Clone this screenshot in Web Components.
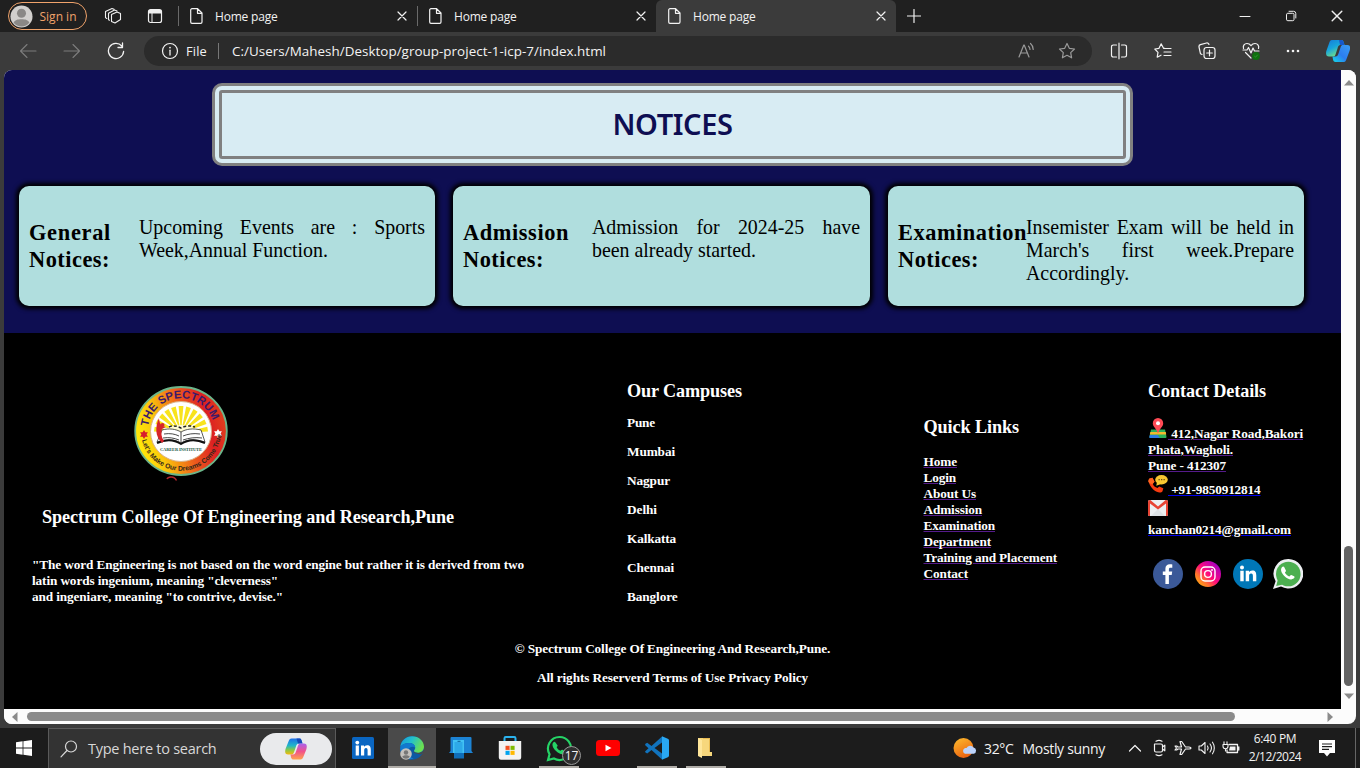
<!DOCTYPE html>
<html lang="en">
<head>
<meta charset="utf-8">
<title>Home page</title>
<style>
html,body{margin:0;height:100%;overflow:hidden;background:#3b3b3b}
body{font-family:"Open Sans","Noto Sans",sans-serif;font-size:12px;color:#fff}
</style>
</head>
<body>
<desktop-screen></desktop-screen>
<script>
const define = (name, html, setup) => customElements.define(name, class extends HTMLElement {
  connectedCallback() {
    if (this.shadowRoot) return;
    const t = document.createElement('template');
    t.innerHTML = typeof html === 'function' ? html(this) : html;
    this.attachShadow({mode: 'open'}).appendChild(t.content.cloneNode(true));
    if (setup) setup(this);
  }
});

/* Icon library: [viewBox width, viewBox height, markup] */
const S = 'fill="none" stroke="currentColor" stroke-linecap="round" stroke-linejoin="round"';
const waPath = 'M8 1.2a6.8 6.8 0 0 0-5.9 10.2L1.2 14.8l3.5-.9A6.8 6.8 0 1 0 8 1.2z';
const handset = 'M5.6 4.4c-.3-.5-.9-.5-1.3 0-1 1.2-.3 3.2 1.5 5s4 2.6 5.2 1.6c.7-.5.7-1.1.2-1.4l-1.4-.8c-.4-.2-.7 0-1.1.6-.9-.2-2.1-1.4-2.4-2.3.5-.4.7-.7.5-1.1z';
const ICONS = {
  avatar:[24,24,'<circle cx="12" cy="12" r="11.5" fill="#d2d0ce"/><circle cx="12" cy="8.6" r="4.7" fill="#8a8886"/><path d="M3.8 18.6C5 15.4 8 14.8 12 14.8s7 .6 8.200 3.800A10.500 10.500 0 0 1 3.800 18.600z" fill="#8a8886"/>'],
  workspaces:[18,18,`<g ${S} stroke-width="1.1"><path d="M7.500 7.500L13 5l3.500 1.500v6L11 16l-3.500-1.500z"/><path d="M5.500 13.300L4.500 12.800V6.200L10.500 3l2.500 1M2.800 11.500L1.500 10.600V4.600L8 1.500l2 .8"/></g>`],
  tabactions:[16,16,`<rect x="1.500" y="1.500" width="13" height="13" rx="2" ${S} stroke-width="1.200"/><path d="M2 2h12v3.500H2z" fill="currentColor"/><path d="M5 5v9" ${S} stroke-width="1"/>`],
  file:[13,16,`<path d="M2 .7h5.600L12 5v9a1.300 1.300 0 0 1-1.300 1.300H2A1.300 1.300 0 0 1 .7 14V2A1.300 1.300 0 0 1 2 .7zM7.500 1v4.300H12" ${S} stroke-width="1.200"/>`],
  close:[10,10,`<path d="M1 1l8 8M9 1l-8 8" ${S} stroke-width="1.200"/>`],
  plus:[14,14,`<path d="M7 .5v13M.5 7h13" ${S} stroke-width="1.200"/>`],
  min:[12,12,`<path d="M1 6.500h10" ${S} stroke-width="1"/>`],
  restore:[12,12,`<path d="M1.500 4.500a1.200 1.200 0 0 1 1.200-1.200h5A1.200 1.200 0 0 1 9 4.500v5a1.200 1.200 0 0 1-1.200 1.200h-5a1.200 1.200 0 0 1-1.300-1.200zM4 1.300h4.500A2.300 2.300 0 0 1 10.800 3.600V8" ${S} stroke-width="1"/>`],
  back:[18,16,`<path d="M17 8H1.500M8 1.500L1.500 8 8 14.500" ${S} stroke-width="1.100"/>`],
  forward:[18,16,`<path d="M1 8h15.500M10 1.500L16.500 8 10 14.500" ${S} stroke-width="1.100"/>`],
  reload:[18,18,`<path d="M16.600 9.500A7.600 7.600 0 1 1 14.800 4M15.500 1v4.500H11" ${S} stroke-width="1.300"/>`],
  info:[18,18,`<circle cx="9" cy="9" r="7.500" ${S} stroke-width="1.200"/><path d="M9 8.200V13" ${S} stroke-width="1.300"/><circle cx="9" cy="5.600" r=".9" fill="currentColor"/>`],
  read:[18,16,`<path d="M1 15L5.800 3h.4L11 15M2.700 11h6.600M10.500 4.200c1 .8 1.500 2 1.500 3.300M12.500 1.500c1.800 1.500 2.700 3.500 2.700 6" ${S} stroke-width="1.200"/>`],
  star:[18,18,`<path d="M9 1.500l2.300 4.800 5.200.7-3.800 3.600.9 5.200L9 13.300l-4.600 2.500.9-5.200L1.500 7l5.200-.7z" ${S} stroke-width="1.200"/>`],
  split:[18,18,`<path d="M6.500 3H3.200A1.700 1.700 0 0 0 1.500 4.700v8.600A1.700 1.700 0 0 0 3.200 15h3.300M11.500 3h3.300a1.700 1.700 0 0 1 1.700 1.700v8.600a1.700 1.700 0 0 1-1.700 1.700h-3.300M9 1.200v15.600" ${S} stroke-width="1.200"/>`],
  favs:[18,18,`<path d="M10.800 6.300H9.500L7.200 1.800 5 6.300l-4.200.7L4 10.300l-.8 4.900L7 13.200M10.800 6.500H17M10 10h7M10 13.500h7" ${S} stroke-width="1.200"/>`],
  collections:[18,18,`<rect x="6" y="5.500" width="11" height="11" rx="2.500" ${S} stroke-width="1.200"/><path d="M11.500 8.200v5.600M8.700 11h5.600M4 12.500L2.500 11.800 1 5A2 2 0 0 1 2.400 2.700L8.500 1A2 2 0 0 1 11 2.500" ${S} stroke-width="1.200"/>`],
  health:[18,18,`<path d="M1.500 6.500C.7 3.500 2.500 1.500 5 1.500c1.800 0 3 .8 4 2.200 1-1.400 2.200-2.200 4-2.200 2.800 0 4.300 2.500 3.500 5M1 8h4l1.500-2.500L9 11l2-5 1.500 3H17M3.500 10.500L9 16" ${S} stroke-width="1.200"/><circle cx="14" cy="14" r="3.900" fill="#0f700f"/><path d="M12.300 14l1.200 1.200 2.200-2.400" fill="none" stroke="#3ea13e" stroke-width=".7"/>`],
  dots:[14,4,'<g fill="currentColor"><circle cx="2" cy="2" r="1.300"/><circle cx="7" cy="2" r="1.300"/><circle cx="12" cy="2" r="1.300"/></g>'],
  copilotblue:[24,24,'<defs><linearGradient id="a" x2=".6" y2="1"><stop offset="0" stop-color="#1679d8"/><stop offset=".5" stop-color="#17a5dc"/><stop offset="1" stop-color="#7ce77e"/></linearGradient><linearGradient id="b" x1="1" x2="0" y2="1"><stop offset="0" stop-color="#3a9df5"/><stop offset=".55" stop-color="#2c7df0"/><stop offset="1" stop-color="#12dbe8"/></linearGradient></defs><path d="M6 1h9.500c2 0 2.200 2 3 5h-4c-2 0-2.400 1.500-3 3.500l-2 6c-.7 2-1.300 2-3 2H3c-3 0-3.500-3-2.500-6l2.500-7C3.700 2 4.500 1 6 1z" fill="url(#a)"/><path d="M13 1h2.500c2 0 2.200 2 3 5h-4.500z" fill="#1657cc"/><path d="M18 23H9.500c-2.500 0-2.500-3-3-5.500h3c1.800 0 2.300-1 3-3l2-6c.6-2 1.200-2.500 3-2.500H21.500c3 0 3 3 2 6l-3 8c-.7 2-1.200 3-2.500 3z" fill="url(#b)"/>'],
  windows:[16,16,'<path d="M0 2.200L6.600 1.300v6.300H0zM7.400 1.200L16 0v7.600H7.400zM0 8.400h6.600v6.300L0 13.800zM7.400 8.400H16V16l-8.600-1.200z" fill="#fff"/>'],
  search:[18,18,`<circle cx="11" cy="6.500" r="5.500" ${S} stroke-width="1.200"/><path d="M7 10.500L1 16.800" ${S} stroke-width="1.200"/>`],
  copilot:[24,24,'<defs><linearGradient id="c" y2="1" x2="0"><stop offset="0" stop-color="#1c6fe8"/><stop offset=".45" stop-color="#20b7c8"/><stop offset=".7" stop-color="#83c84c"/><stop offset="1" stop-color="#f6b90c"/></linearGradient><linearGradient id="d" y2="1" x2="0"><stop offset="0" stop-color="#a961ee"/><stop offset=".5" stop-color="#f2528a"/><stop offset="1" stop-color="#ffa34d"/></linearGradient></defs><path d="M7.500 1.500h8c2 0 2 2 3 5h-3.500c-2 0-2.600 1.500-3.200 3.500l-1.700 5c-.7 2-1.300 2.500-3 2.500H4c-3 0-3.300-3-2.300-6l2.800-7c.7-2 1.500-3 3-3z" fill="url(#c)"/><path d="M12.500 1.500h3c2 0 2 2 3 5H14z" fill="#1649b8"/><path d="M16.500 22.500H9.500c-2.500 0-2.500-2.500-3-5h2.500c1.800 0 2.300-1 3-3l1.700-5c.6-2 1.200-3 3-3h3.300c3 0 3.300 3 2.300 6L19.500 19.500c-.7 2-1.500 3-3 3z" fill="url(#d)"/>'],
  linkedin:[22,22,'<rect width="22" height="22" rx="1.500" fill="#0a66c2"/><g fill="#fff"><circle cx="5.300" cy="5.600" r="1.900"/><path d="M3.700 8.600h3.200v9.800H3.700zM9 8.600h3v1.400c.6-1 1.600-1.700 3.100-1.700 3 0 3.700 2 3.700 4.600v5.500h-3.200v-4.900c0-1.300-.2-2.500-1.600-2.500s-1.800 1.100-1.800 2.400v5H9z"/></g>'],
  edge:[24,24,'<defs><linearGradient id="e" x2="1" y2=".4"><stop offset="0" stop-color="#1895dc"/><stop offset=".5" stop-color="#23c1cb"/><stop offset="1" stop-color="#6be052"/></linearGradient></defs><circle cx="12" cy="12" r="11.800" fill="#0c59a4"/><path d="M.3 11C1 4.500 6 .2 12 .2c7 0 12 5 12 10.500 0 3.800-2.900 6-6 6-2.600 0-4-1-4-2 0-.8 1.200-1.200 1.200-3C15.200 9 12.500 7 9 7 5 7 1.500 9 .3 11z" fill="url(#e)"/><path d="M.3 11C2 8.500 5 7 9 7c3.500 0 6.200 2 6.200 4.700-1.500-1.600-5-1.200-6.400 1.300-2 3.600.8 8.500 4.800 9.500C7 25-.8 20 .3 11z" fill="#1279cf"/><path d="M13.500 14.700c0 1 1.500 2.300 4.500 2.300 2.500 0 4.500-1 6-3l.2 2-3.200 2.500-7-1.500z" fill="#4a4a4a"/><circle cx="6" cy="18" r="5.800" fill="#c4c1bd"/><circle cx="6" cy="16.500" r="2.200" fill="#777"/><path d="M2.300 20.800c1-2 6.400-2 7.400 0-1.500 2.600-6 2.600-7.400 0z" fill="#777"/>'],
  pc:[24,24,'<path d="M2.500 1h19a1 1 0 0 1 1 1v13l1.500 2H0l1.500-2V2a1 1 0 0 1 1-1z" fill="#1c83d4"/><path d="M4 4h11v13H4z" fill="#41c2f4"/><path d="M5 17h10v5.500H5z" fill="#0f6db8"/><path d="M5.500 6h8v11h-8z" fill="#2da9e8"/><path d="M8.500 5.300h3" stroke="#0d5c95"/>'],
  store:[24,24,'<path d="M6.500 6V2.200A1.200 1.200 0 0 1 7.700 1h8.600a1.200 1.200 0 0 1 1.200 1.200V6" fill="none" stroke="#2bb3ee" stroke-width="2"/><path d="M.8 5h22.400v16.500a2.200 2.200 0 0 1-2.200 2.200H3a2.200 2.200 0 0 1-2.200-2.200z" fill="#f3f3f3"/><path d="M7.500 9.800h4.100v4.100H7.500z" fill="#f25022"/><path d="M12.500 9.800h4.100v4.100h-4.100z" fill="#7fba00"/><path d="M7.500 14.800h4.100v4.100H7.500z" fill="#00a4ef"/><path d="M12.500 14.800h4.100v4.100h-4.100z" fill="#ffb900"/>'],
  whatsapp:[16,16,`<path d="${waPath}" fill="#1c1c1c" stroke="#25d366" stroke-width="1.300"/><path d="${handset}" fill="#25d366"/>`],
  youtube:[24,16,'<rect width="24" height="16" rx="3.500" fill="#f00"/><path d="M9.500 4.700v6.600l6-3.300z" fill="#fff"/>'],
  vscode:[24,24,'<path d="M17 .5L6.500 10 2.200 6.800.5 7.800 0 9l3.500 3.200L0 15.500l.5 1 1.700 1L6.500 14 17 23.500z" fill="#1173bd"/><path d="M17 17.500V6.500L9.500 12z" fill="#1c1c1c"/><path d="M17 .3l5.800 2.500c.7.300 1.200.8 1.200 1.700v15c0 .9-.5 1.400-1.200 1.700L17 23.700z" fill="#29a8f3"/>'],
  folder:[16,20,'<path d="M1 0h10v18H1z" fill="#f6d473"/><path d="M6 3.500V0h7v14h2v4H6z" fill="#e9bb52"/><path d="M1 0l4 2v18l-4-2z" fill="#ffe69a"/><path d="M5 1h7v13h3v4H5z" fill="#f7d77c"/>'],
  weather:[24,22,'<defs><linearGradient id="w" x2=".5" y2="1"><stop offset="0" stop-color="#fdbe2e"/><stop offset="1" stop-color="#ec6410"/></linearGradient></defs><circle cx="10.500" cy="11" r="10" fill="url(#w)"/><path d="M12 16.700a3 3 0 0 1-.3-5.500c.6-.3 1.300-.4 1.800-.2a4 4 0 0 1 7-.5 3.200 3.200 0 0 1 .3 6.200z" fill="#bcd3fb"/>'],
  chevron:[14,8,`<path d="M1.500 7L7 1.500 12.500 7" ${S} stroke-width="1.200"/>`],
  meet:[16,18,`<path d="M3.500 5h6.500a1.500 1.500 0 0 1 1.500 1.500v5A1.500 1.500 0 0 1 10 13H5a1.500 1.500 0 0 1-1.500-1.500zM11.500 8l2.300-1.800v5.600L11.500 10M5 2.200c2-1.200 4-1.200 6 0M5 15.800c2 1.200 4 1.200 6 0" ${S} stroke-width="1.200"/>`],
  plane:[18,16,`<path d="M1 6l1.500 2L1 10h1.700l1.200-1h3.600L6 14.500h1.700L11.500 9H15c1 0 2-.4 2-1s-1-1-2-1h-3.500L7.700 1.500H6L7.500 7H3.900L2.700 6z" ${S} stroke-width="1.200"/>`],
  volume:[18,16,`<path d="M1 6h2.300L7 2.500v11L3.300 10H1zM9.500 6c.8 1.200.8 2.800 0 4M12 4c1.700 2.300 1.700 5.700 0 8M14.500 2.200c2.400 3.300 2.400 8.300 0 11.600" ${S} stroke-width="1.100"/>`],
  battery:[18,14,`<path d="M7 3.500h8.500v8H5V9M16.800 6v3" ${S} stroke-width="1.300"/><path d="M8 5.500h5.500v4H7z" fill="currentColor"/><path d="M2 .8V3M5 .8V3M1 3.500h5v1.700a2.500 2.500 0 0 1-5 0zM3.500 8v2" ${S} stroke-width="1.100"/>`],
  notify:[18,17,'<path d="M1 0h16v13h-5l-3 3.500L6 13H1z" fill="#fff"/><path d="M4 4h10M4 6.700h10M4 9.400h7" stroke="#1c1c1c" stroke-width="1.200"/>'],
  map:[18,20,'<path d="M2 11.500h14l1.500 7.500a1 1 0 0 1-1 1h-15a1 1 0 0 1-1-1z" fill="#2cb05a"/><path d="M1.300 14h15.500l.4 2.500H.8z" fill="#f4b82e"/><path d="M.8 17h8l2 3H1a.8.800 0 0 1-.7-1z" fill="#2b7de1"/><path d="M9 0a5.200 5.200 0 0 0-5.200 5.300C3.800 9 7.500 10.500 9 15.500c1.500-5 5.200-6.500 5.200-10.200A5.200 5.200 0 0 0 9 0z" fill="#ff4b55"/><circle cx="9" cy="5.200" r="2" fill="#fff"/>'],
  phone:[20,18,'<path d="M1.500 3.500l3-.8 2 4-1.700 2c.6 2 2.200 3.600 4.700 4.300l1.700-1.500 4.100 1.800-.8 3C13.500 18 9.500 18.300 5.500 14.800S-.5 5.500 1.500 3.500z" fill="#f73b10"/><path d="M1.500 3.500l3-.8 2 4-1.700 2c-1 1.300-4-.7-4.600-2.200.2-1.500.6-2.500 1.300-3z" fill="#ff641f"/><ellipse cx="13.500" cy="4.800" rx="6.300" ry="4.700" fill="#f8c831"/><path d="M9 7l-.7 3.800L13 9z" fill="#f8c831"/><path d="M10.500 4.700h1.300M13 4.700h1.300M15.500 4.700h1.300" stroke="#6b5212" stroke-width="1.200"/>'],
  gmail:[20,16,'<rect width="20" height="16" rx="1.500" fill="#eceff1"/><path d="M10 9l7 7H3z" fill="#dde2e5"/><path d="M1.700 0h.6L10 6.500 17.700 0h.6A1.700 1.700 0 0 1 20 1.700V14.500a1.500 1.500 0 0 1-1.500 1.500H18V3.500L10 9.500 2 3.500V16h-.5A1.500 1.500 0 0 1 0 14.500V1.700A1.700 1.700 0 0 1 1.700 0z" fill="#e84434"/>'],
  facebook:[30,30,'<circle cx="15" cy="15" r="15" fill="#3b5998"/><path d="M12.400 25V16H9.800v-3.600h2.600v-2.600c0-3 1.700-4.500 4.400-4.500 1.200 0 2 .1 2.500.2v3.200h-1.700c-1.400 0-1.700.7-1.700 1.700v2h3.300l-.5 3.600h-2.800v9z" fill="#fff"/>'],
  instagram:[26,26,'<defs><linearGradient id="g" x2="1" y1="1" y2="0"><stop offset="0" stop-color="#ffc800"/><stop offset=".3" stop-color="#ff6c32"/><stop offset=".5" stop-color="#ff0a7c"/><stop offset=".8" stop-color="#b900b4"/><stop offset="1" stop-color="#5000d8"/></linearGradient></defs><circle cx="13" cy="13" r="13" fill="url(#g)"/><g fill="none" stroke="#fff" stroke-width="1.400"><rect x="6" y="6" width="14" height="14" rx="4"/><circle cx="13" cy="13" r="3.400"/></g><circle cx="17" cy="9" r=".9" fill="#fff"/>'],
  linkedinround:[30,30,'<circle cx="15" cy="15" r="15" fill="#0077b7"/><g fill="#fff"><circle cx="9" cy="8.600" r="2"/><path d="M7.300 11.800h3.400v10.500H7.300zM12.700 11.800H16v1.500c.6-1 1.700-1.800 3.300-1.800 3.200 0 4 2 4 5v5.800h-3.400v-5.200c0-1.400-.2-2.700-1.800-2.700s-2 1.200-2 2.600v5.300h-3.400z"/></g>'],
  whatsappround:[30,30,'<path d="M15.300 0A14.700 14.700 0 0 0 2.600 22.200L0 30l8-2.400A14.800 14.800 0 1 0 15.300 0z" fill="#eceff1"/><circle cx="15.300" cy="15" r="12.300" fill="#4caf50"/><path d="M3.200 27l1.700-6.500 5 5z" fill="#4caf50"/><path d="M11.300 8.300c-.5-1-1.600-1-2.400 0-1.700 2.200-.7 5.600 2.400 8.600s6.900 4.600 9.300 2.700c1.100-.9 1.200-2 .5-2.400l-2.800-1.300c-.7-.2-1.200.9-1.900 1.500-1.600-.4-3.600-2-4.500-4 .6-.7 1.300-1.300 1-2z" fill="#fff"/>'],
  up:[10,6,'<path d="M5 0l5 5.500H0z" fill="#8b8b8b"/>'],
  down:[10,6,'<path d="M0 .5h10L5 6z" fill="#8b8b8b"/>'],
  left:[6,10,'<path d="M0 5l5.500-5v10z" fill="#8b8b8b"/>'],
  right:[6,10,'<path d="M.5 0L6 5 .5 10z" fill="#8b8b8b"/>']
};
define('ui-icon', el => {
  const [w,h,m] = ICONS[el.getAttribute('name')];
  const W = el.getAttribute('w') || w, H = el.getAttribute('h') || W*h/w;
  return `<style>:host{display:inline-block;flex:none;width:${W}px;height:${H}px}svg{display:block}</style><svg width="${W}" height="${H}" viewBox="0 0 ${w} ${h}">${m}</svg>`;
});

define('browser-tab', `<style>
:host{display:flex;align-items:center;width:239px;height:32px;box-sizing:border-box;padding:0 10px 0 12px;color:#f2f2f2;background:linear-gradient(#6a6a6a,#6a6a6a) 0 50%/1px 20px no-repeat}
:host([active]){width:240px;background:#3b3b3b;border-radius:6px 6px 0 0}
.t{flex:1;padding-left:12px}
</style><ui-icon name="file"></ui-icon><div class="t"><fit-text w="62.500"><slot></slot></fit-text></div><ui-icon name="close"></ui-icon>`);

define('tab-strip', `<style>
:host{display:flex;height:32px;background:#202020;align-items:center;color:#f0f0f0}
.sign{display:flex;align-items:center;gap:6.500px;margin-left:8px;width:79px;height:28px;box-sizing:border-box;border:1.500px solid #f0a36b;border-radius:14px;padding-left:1px;color:#f0a36b}
.plus{margin-left:10.500px}.win{margin-left:auto;display:flex;gap:34px;padding-right:17px;align-items:center}
</style>
<div class="sign"><ui-icon name="avatar" w="23"></ui-icon><fit-text w="37">Sign in</fit-text></div>
<ui-icon name="workspaces" style="margin-left:17px"></ui-icon><ui-icon name="tabactions" style="margin:0 15px 0 25px"></ui-icon>
<browser-tab>Home page</browser-tab><browser-tab>Home page</browser-tab><browser-tab active>Home page</browser-tab>
<ui-icon class="plus" name="plus"></ui-icon>
<div class="win"><ui-icon name="min"></ui-icon><ui-icon name="restore"></ui-icon><ui-icon name="close" w="12"></ui-icon></div>`);

define('address-bar', `<style>
:host{display:flex;height:38px;background:#3b3b3b;align-items:center;color:#f3f3f3}
.nav{display:flex;gap:26px;padding-left:19px;width:125px;box-sizing:border-box;align-items:center;color:#7c7c7c}
.url{display:flex;align-items:center;width:948px;height:30px;margin-left:19px;background:#2b2b2b;border-radius:15px;padding:0 16px;box-sizing:border-box;font-size:13.400px}
.sep{width:1px;height:16px;background:#777;margin:0 13px 0 11px}
.dim{color:#9a9a9a;margin-left:auto;display:flex;gap:22px}
.acts{flex:1;display:flex;align-items:center;justify-content:space-between;padding:0 10px 0 18px}
</style>
<div class="nav"><ui-icon name="back"></ui-icon><ui-icon name="forward"></ui-icon><ui-icon name="reload" style="color:#f3f3f3"></ui-icon></div>
<div class="url"><ui-icon name="info" style="margin:0 7px 0 1px"></ui-icon><fit-text w="21" style="font-size:12.800px">File</fit-text><i class="sep"></i><fit-text w="374">C:/Users/Mahesh/Desktop/group-project-1-icp-7/index.html</fit-text>
<div class="dim"><ui-icon name="read"></ui-icon><ui-icon name="star"></ui-icon></div></div>
<div class="acts"><ui-icon name="split"></ui-icon><ui-icon name="favs"></ui-icon><ui-icon name="collections"></ui-icon><ui-icon name="health"></ui-icon><ui-icon name="dots"></ui-icon><ui-icon name="copilotblue"></ui-icon></div>`);

define('notice-card', `<style>
:host{display:flex;justify-content:space-between;width:416px;height:120px;box-sizing:border-box;padding:0 10px;background:#b0dede;border-radius:10px;box-shadow:0 0 4px 3px #000;color:#000;font-family:"Liberation Serif",serif}
:host([wide]){width:417px}
.h{padding-top:33px;font:bold 22.400px/27px "Liberation Serif",serif}
p{margin:30px 0 0;width:var(--w);font-size:19.900px;line-height:23px;text-align:justify}
</style><div class="h"><slot name="title"></slot></div><p><slot></slot></p>`);

define('notice-board', `<style>
:host{display:block;height:263px;background:#0e0e52;box-sizing:border-box;padding-top:13px}
.title{width:921px;height:83px;box-sizing:border-box;margin-left:208px;border:10px double #808080;border-radius:10px;background:#d8ecf3;color:#0e0e52;display:flex;align-items:center;justify-content:center;font:600 29px "Noto Sans",sans-serif;padding-bottom:3px}
.cards{display:flex;gap:18px;padding:20px 0 0 15px}
</style>
<div class="title"><fit-text w="120">NOTICES</fit-text></div>
<div class="cards">
<notice-card style="--w:286px"><div slot="title"><fit-text w="82">General</fit-text><fit-text w="81">Notices:</fit-text></div>Upcoming Events are : Sports Week,Annual Function.</notice-card>
<notice-card wide style="--w:268px"><div slot="title"><fit-text w="106">Admission</fit-text><fit-text w="81">Notices:</fit-text></div>Admission for 2024-25 have been&nbsp;already started.</notice-card>
<notice-card style="--w:268px"><div slot="title" style="width:128px"><fit-text w="129">Examination</fit-text><fit-text w="81">Notices:</fit-text></div>Insemister Exam will be held in March's first week.Prepare Accordingly.</notice-card>
</div>`);

define('college-logo', () => {
  let rays = '';
  for (let i = 0; i < 11; i++) {
    const a = Math.PI * (1 + (i + .5) / 11), b = .09;
    rays += `<path d="M47 47L${(47+27*Math.cos(a-b)).toFixed(1)} ${(47+27*Math.sin(a-b)).toFixed(1)}L${(47+27*Math.cos(a+b)).toFixed(1)} ${(47+27*Math.sin(a+b)).toFixed(1)}z" fill="#f8e31d"/>`;
  }
  return `<style>:host{display:block;width:94px;height:96px}svg{display:block;overflow:visible}</style>
<svg width="94" height="96" viewBox="0 0 94 96"><defs>
<linearGradient id="r" y1=".6" y2=".35"><stop offset="0" stop-color="#ffee0a"/><stop offset=".25" stop-color="#fbc40c"/><stop offset=".55" stop-color="#ee5b1c"/><stop offset=".8" stop-color="#dc1f22"/><stop offset="1" stop-color="#e2441c"/></linearGradient>
<path id="top" d="M14.300 40.500A33 32 0 0 1 80 42L82 50"/><path id="bot" d="M8 54A40 39.500 0 0 0 86 54L88 48"/></defs>
<ellipse cx="47" cy="45" rx="45.800" ry="44" fill="url(#r)" stroke="#6cb58a" stroke-width="1.800"/>
<ellipse cx="47" cy="45.500" rx="30.500" ry="30" fill="#fff" stroke="#d9b28b" stroke-width="1"/>
${rays}
<ellipse cx="47" cy="45" rx="15" ry="6" fill="#fffbd0"/>
<path d="M35 41c4-2 8-1 12 1 4-2 8-3 14-1" fill="none" stroke="#222" stroke-width="1.500" stroke-dasharray="3 2"/>
<path d="M28 44c7-2 14-1 19 2 5-3 12-4 20-2l4 12c-9-3-18-3-24 1-6-4-15-4-24-1z" fill="#fff" stroke="#333" stroke-width=".8"/>
<path d="M47 46v11M30 48c6-1 11 0 15 2M29 52c6-1 11 0 16 2M49 50c5-2 10-3 17-2M49 54c6-2 12-3 19-2" fill="none" stroke="#333" stroke-width=".9"/>
<path d="M23 57c9-4 18-3 24 1 6-4 15-5 24-1" fill="none" stroke="#111" stroke-width="2"/>
<path d="M25 32c-4 9-4 18 3 25l2-2c-3-4-3-8-2-12l4-2-4-1c-2-2-3-5-3-8z" fill="#d6242a"/><circle cx="28.500" cy="39" r="2" fill="#d6242a"/>
<path d="M10 44l1.300 2.200h2.600l-1.300 2.300 1.300 2.300h-2.600L10 53l-1.300-2.200H6.100l1.300-2.300-1.300-2.300h2.600z" fill="#d81e2c"/><path d="M84 43l1.300 2.200h2.600l-1.300 2.300 1.300 2.300h-2.600L84 52l-1.300-2.200h-2.600l1.300-2.300-1.300-2.300h2.600z" fill="#fff"/>
<text font-family="Liberation Serif,serif" font-weight="bold" font-size="4.600" fill="#1d5a4a" x="26" y="64.500" textLength="42">CAREER INSTITUTE</text>
<text font-family="Liberation Sans,sans-serif" font-size="11.200" fill="#3a1b6b"><textPath href="#top">THE SPECTRUM</textPath></text>
<text font-family="Liberation Sans,sans-serif" font-size="6.800" fill="#33271b"><textPath href="#bot">Let's Make Our Dreams Come True</textPath></text>
<path d="M33 93c1-2.500 7-3.500 9.500 1.500" fill="none" stroke="#b3262b" stroke-width="1.500"/></svg>`;
});

define('footer-heading', `<style>:host{display:block;font-size:18.200px;line-height:21px}</style><slot></slot>`);
define('footer-link', `<style>:host{display:block;height:16px}fit-text{--deco:underline 1px var(--line,#551a8b)}</style><fit-text><slot></slot></fit-text>`,
  el => el.shadowRoot.querySelector('fit-text').setAttribute('w', el.getAttribute('w')));

define('site-footer', `<style>
:host{display:block;height:376px;background:#000;color:#fff;font:bold 13.280px/16px "Liberation Serif",serif}
.cols{display:grid;grid-template-columns:595px 296.500px 224.500px 1fr;padding-left:28px;height:308px;box-sizing:border-box}
.about{padding-top:53px}.about footer-heading{margin:25px 0 29px 10px}college-logo{margin-left:101.500px}
.camp{padding-top:48px;display:flex;flex-direction:column;gap:13px}
.quick{padding-top:84px}.quick footer-heading{margin-bottom:16px}
.contact{padding-top:48px}.contact footer-heading{margin-bottom:16px}
.row{display:flex;align-items:flex-end;height:24px;box-sizing:border-box}
.b{--line:#0000ee}
.soc{display:flex;align-items:center;margin:21px 0 0 5px}
.copy{display:flex;flex-direction:column;align-items:center;gap:13px}
</style>
<div class="cols">
<div class="about"><college-logo></college-logo><footer-heading><fit-text w="412">Spectrum College Of Engineering and Research,Pune</fit-text></footer-heading>
<fit-text w="492">"The word Engineering is not based on the word engine but rather it is derived from two</fit-text><fit-text w="246">latin words ingenium, meaning "cleverness"</fit-text><fit-text w="251">and ingeniare, meaning "to contrive, devise."</fit-text></div>
<div class="camp"><footer-heading><fit-text w="115">Our Campuses</fit-text></footer-heading><fit-text w="28">Pune</fit-text><fit-text w="48">Mumbai</fit-text><fit-text w="43">Nagpur</fit-text><fit-text w="30">Delhi</fit-text><fit-text w="49">Kalkatta</fit-text><fit-text w="47">Chennai</fit-text><fit-text w="50.500">Banglore</fit-text></div>
<div class="quick"><footer-heading><fit-text w="95.500">Quick Links</fit-text></footer-heading><footer-link w="33.500">Home</footer-link><footer-link w="32.500">Login</footer-link><footer-link w="52.500">About Us</footer-link><footer-link w="58.500">Admission</footer-link><footer-link w="71.500">Examination</footer-link><footer-link w="67.500">Department</footer-link><footer-link w="133.500">Training and Placement</footer-link><footer-link w="44.500">Contact</footer-link></div>
<div class="contact"><footer-heading><fit-text w="118">Contact Details</fit-text></footer-heading>
<div class="row"><ui-icon name="map" style="margin:0 1px 4px"></ui-icon><footer-link w="135">&nbsp;412,Nagar Road,Bakori</footer-link></div>
<footer-link w="85">Phata,Wagholi.</footer-link><footer-link w="78">Pune - 412307</footer-link>
<div class="row"><ui-icon name="phone" style="margin-bottom:5px"></ui-icon><footer-link class="b" w="92.500">&nbsp;+91-9850912814</footer-link></div>
<div class="row"><ui-icon name="gmail" style="margin-bottom:6px"></ui-icon></div>
<footer-link class="b" w="143">kanchan0214@gmail.com</footer-link>
<div class="soc"><ui-icon name="facebook"></ui-icon><ui-icon name="instagram" style="margin:0 12px"></ui-icon><ui-icon name="linkedinround"></ui-icon><ui-icon name="whatsappround" style="margin-left:10px"></ui-icon></div></div>
</div>
<div class="copy"><fit-text w="315.500">© Spectrum College Of Engineering And Research,Pune.</fit-text><fit-text w="271">All rights Reserverd Terms of Use Privacy Policy</fit-text></div>`);

define('scroll-track', `<style>
:host{display:flex;background:#fcfcfc;align-items:center;box-sizing:border-box}
:host([dir=v]){flex-direction:column;width:15px;height:639px;padding:10px 0 10px}
:host([dir=h]){height:15px;padding:0 8px 0 8px;width:1337px}
.v{width:9px;height:140px;background:#636363;border-radius:5px;margin:auto 0 7px}
.h{height:9px;width:1208px;background:#8b8b8b;border-radius:5px;margin:0 auto 0 9px}
</style>`, el => {
  const v = el.getAttribute('dir') === 'v';
  const t = document.createElement('template');
  t.innerHTML = v ? '<ui-icon name="up"></ui-icon><div class="v"></div><ui-icon name="down"></ui-icon>' : '<ui-icon name="left"></ui-icon><div class="h"></div><ui-icon name="right"></ui-icon>';
  el.shadowRoot.appendChild(t.content.cloneNode(true));
});

define('page-view', `<style>
:host{display:grid;grid-template:639px 15px/1337px 15px;width:1352px;height:654px;margin-left:4px;border-radius:8px;overflow:hidden;background:#fcfcfc}
</style><main><notice-board></notice-board><site-footer></site-footer></main><scroll-track dir="v"></scroll-track><scroll-track dir="h"></scroll-track>`);

define('task-item', `<style>
:host{display:flex;width:49px;height:40px;align-items:center;justify-content:center;position:relative}
:host([running])::after{content:"";position:absolute;left:5px;right:4px;bottom:0;height:2px;background:#b0ada8}
:host([active]){width:48px;background:#4a4a4a}
:host([active])::after{left:0;right:0}
.badge{position:absolute;left:28px;top:18px;width:17px;height:17px;border-radius:50%;background:#2e2e2e;border:1px solid #999;display:flex;align-items:center;justify-content:center;font-size:12px}
</style><slot></slot>`, el => {
  if (el.hasAttribute('badge')) { const t = document.createElement('template'); t.innerHTML = `<div class="badge"><span>${el.getAttribute('badge')}</span></div>`; el.shadowRoot.appendChild(t.content); }
});

define('task-bar', `<style>
:host{display:flex;height:40px;background:#1c1c1c;margin-top:4px;align-items:center;color:#f3f3f3}
.start{width:48px;display:flex;justify-content:center}
.search{width:288px;height:40px;box-sizing:border-box;border:1px solid #5a5a5a;border-bottom:0;background:#333;display:flex;align-items:center;padding:0 3px 0 11px;font-size:14.500px;color:#d8d8d8}
.search fit-text{flex:1;padding-left:10px}
.pill{width:72px;height:32px;border-radius:16px;background:#e9eaec;display:flex;align-items:center;justify-content:center}
.apps{display:flex;padding-left:3px}
.tray{margin-left:auto;display:flex;align-items:center;height:40px;font-size:14px}
.ic{display:flex;align-items:center;width:24px;justify-content:center}
.clock{width:66px;display:flex;flex-direction:column;align-items:center;font-size:12px;line-height:18px;margin-left:-1px}
.end{height:40px;width:1px;background:#666;margin:0 4px 0 19px}
</style>
<div class="start"><ui-icon name="windows"></ui-icon></div>
<div class="search"><ui-icon name="search"></ui-icon><fit-text w="128.500">Type here to search</fit-text><div class="pill"><ui-icon name="copilot"></ui-icon></div></div>
<div class="apps"><task-item><ui-icon name="linkedin" style="margin-right:2px"></ui-icon></task-item><task-item active running><ui-icon name="edge"></ui-icon></task-item><task-item><ui-icon name="pc"></ui-icon></task-item><task-item><ui-icon name="store"></ui-icon></task-item><task-item running badge="17"><ui-icon name="whatsapp" w="27" style="margin-left:1px"></ui-icon></task-item><task-item><ui-icon name="youtube"></ui-icon></task-item><task-item running><ui-icon name="vscode"></ui-icon></task-item><task-item running><ui-icon name="folder" style="margin-right:2px"></ui-icon></task-item></div>
<div class="tray"><ui-icon name="weather" style="margin-right:7px"></ui-icon><fit-text w="29.500">32°C</fit-text><fit-text w="82.500" style="margin:0 18px 0 9px">Mostly sunny</fit-text>
<span class="ic"><ui-icon name="chevron"></ui-icon></span><span class="ic"><ui-icon name="meet"></ui-icon></span><span class="ic"><ui-icon name="plane"></ui-icon></span><span class="ic"><ui-icon name="volume"></ui-icon></span><span class="ic"><ui-icon name="battery"></ui-icon></span>
<div class="clock"><fit-text w="42.500">6:40 PM</fit-text><fit-text w="52.500">2/12/2024</fit-text></div>
<ui-icon name="notify" style="margin-left:10px"></ui-icon><i class="end"></i></div>`);

define('desktop-screen', `<style>:host{display:flex;flex-direction:column;width:1360px;height:768px;background:#3b3b3b;overflow:hidden}</style>
<tab-strip></tab-strip><address-bar></address-bar><page-view></page-view><task-bar></task-bar>`);

/* One line of text whose tracking is adjusted so that it fills the width w. */
define('fit-text', `<style>:host{display:block;white-space:nowrap}span{display:inline-block;letter-spacing:0;text-decoration:var(--deco,none);text-underline-offset:1px}</style><span><slot></slot></span>`, el => {
  const s = el.shadowRoot.querySelector('span');
  const text = el.shadowRoot.querySelector('slot').assignedNodes({flatten: true}).map(n => n.textContent).join('');
  const w = parseFloat(el.getAttribute('w'));
  if (w && text.length) s.style.letterSpacing = ((w - s.getBoundingClientRect().width) / text.length).toFixed(3) + 'px';
});
</script>
</body>
</html>
